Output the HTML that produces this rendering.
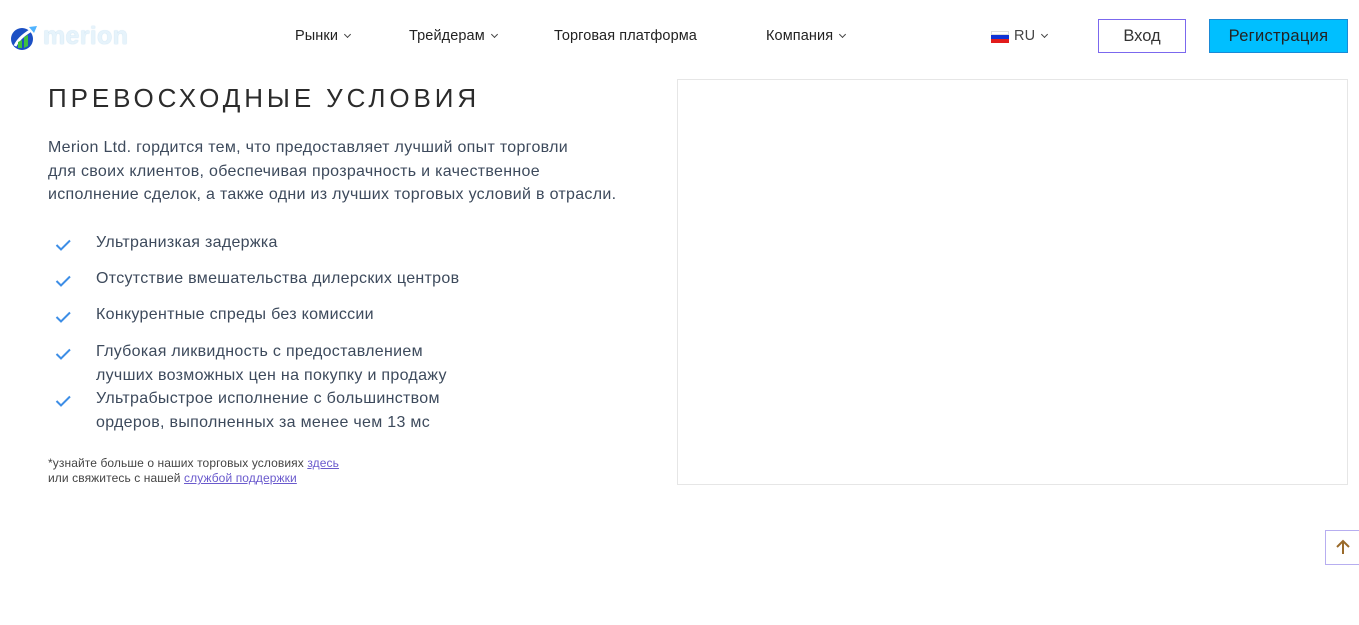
<!DOCTYPE html>
<html><head><meta charset="utf-8"><style>
*{margin:0;padding:0;box-sizing:border-box}
body{width:1359px;height:625px;background:#fff;font-family:"Liberation Sans",sans-serif;position:relative;overflow:hidden;color:#333}
.a{position:absolute;white-space:nowrap}
.nav{font-size:14.5px;color:#222;top:28px;letter-spacing:0.1px}
.chev{display:inline-block;width:5px;height:5px;border-right:1px solid #444;border-bottom:1px solid #444;transform:rotate(45deg);margin-left:7px;position:relative;top:-3px}
.p{font-size:16px;color:#3d4a5c;line-height:23.5px;letter-spacing:0.3px}
.li{font-size:16px;color:#3d4a5c;line-height:23.5px;left:96px;letter-spacing:0.3px}
.ck{position:absolute;left:55px}
a{color:#6a5acd;text-decoration:underline}
</style></head><body>
<svg class="a" style="left:9px;top:24px" width="30" height="28" viewBox="0 0 30 28"><circle cx="13" cy="15" r="11" fill="#1b4fc4"/><path d="M6 22 C10 14 16 10 24 5" stroke="#fff" stroke-width="3" fill="none"/><path d="M9 24 L9 18 L13 16 L13 24 Z M15 24 L15 13 L19 11 L19 22Z" fill="#3fbf3f"/><path d="M20 3 L28 2 L25 9Z" fill="#4fb3ff"/></svg>
<div class="a" style="left:43px;top:22px;font-size:25px;font-weight:bold;color:#e6f3fb;letter-spacing:0.3px;text-shadow:0 0 1px #9cc9e6">merion</div>
<div class="a nav" style="left:295px">Рынки<span class="chev"></span></div>
<div class="a nav" style="left:409px">Трейдерам<span class="chev"></span></div>
<div class="a nav" style="left:554px">Торговая платформа</div>
<div class="a nav" style="left:766px">Компания<span class="chev"></span></div>
<div class="a" style="left:991px;top:31px;width:18px;height:12px"><div style="height:4px;background:#fff;border:0.5px solid #ddd"></div><div style="height:4px;background:#1034d6"></div><div style="height:4px;background:#e21c1c"></div></div>
<div class="a nav" style="left:1014px;color:#444">RU<span class="chev"></span></div>
<div class="a" style="left:1098px;top:19px;width:88px;height:34px;border:1px solid #7b68ee;font-size:16.5px;color:#333;text-align:center;line-height:33px">Вход</div>
<div class="a" style="left:1209px;top:19px;width:139px;height:34px;background:#00bfff;border:1px solid #1a8ad6;font-size:16.5px;color:#222;text-align:center;line-height:33px;letter-spacing:0.3px">Регистрация</div>
<div class="a" style="left:48px;top:83px;font-size:26px;letter-spacing:3.9px;color:#2b2b2b">ПРЕВОСХОДНЫЕ УСЛОВИЯ</div>
<div class="a p" style="left:48px;top:136px">Merion Ltd. гордится тем, что предоставляет лучший опыт торговли<br>для своих клиентов, обеспечивая прозрачность и качественное<br>исполнение сделок, а также одни из лучших торговых условий в отрасли.</div>
<svg class="ck" style="top:239px" width="16" height="12" viewBox="0 0 16 12"><path d="M1.5 6 L6 10.5 L15 1.5" stroke="#3d8ee6" stroke-width="2" fill="none"/></svg>
<div class="a li" style="top:231px">Ультранизкая задержка</div>
<svg class="ck" style="top:275px" width="16" height="12" viewBox="0 0 16 12"><path d="M1.5 6 L6 10.5 L15 1.5" stroke="#3d8ee6" stroke-width="2" fill="none"/></svg>
<div class="a li" style="top:267px">Отсутствие вмешательства дилерских центров</div>
<svg class="ck" style="top:311px" width="16" height="12" viewBox="0 0 16 12"><path d="M1.5 6 L6 10.5 L15 1.5" stroke="#3d8ee6" stroke-width="2" fill="none"/></svg>
<div class="a li" style="top:303px">Конкурентные спреды без комиссии</div>
<svg class="ck" style="top:348px" width="16" height="12" viewBox="0 0 16 12"><path d="M1.5 6 L6 10.5 L15 1.5" stroke="#3d8ee6" stroke-width="2" fill="none"/></svg>
<div class="a li" style="top:340px">Глубокая ликвидность с предоставлением<br>лучших возможных цен на покупку и продажу</div>
<svg class="ck" style="top:395px" width="16" height="12" viewBox="0 0 16 12"><path d="M1.5 6 L6 10.5 L15 1.5" stroke="#3d8ee6" stroke-width="2" fill="none"/></svg>
<div class="a li" style="top:387px">Ультрабыстрое исполнение с большинством<br>ордеров, выполненных за менее чем 13 мс</div>
<div class="a" style="left:48px;top:456px;font-size:12px;line-height:15px;color:#444;letter-spacing:0.1px">*узнайте больше о наших торговых условиях <a>здесь</a><br>или свяжитесь с нашей <a>службой поддержки</a></div>
<div class="a" style="left:677px;top:79px;width:671px;height:406px;border:1px solid #e6e6e6"></div>
<div class="a" style="left:1325px;top:530px;width:40px;height:35px;border:1px solid #b7aef0;background:#fff"></div>
<svg class="a" style="left:1334px;top:538px" width="18" height="18" viewBox="0 0 18 18"><path d="M9 16 V3 M3 9 L9 3 L15 9" stroke="#9a6a2a" stroke-width="2" fill="none"/></svg>
</body></html>
